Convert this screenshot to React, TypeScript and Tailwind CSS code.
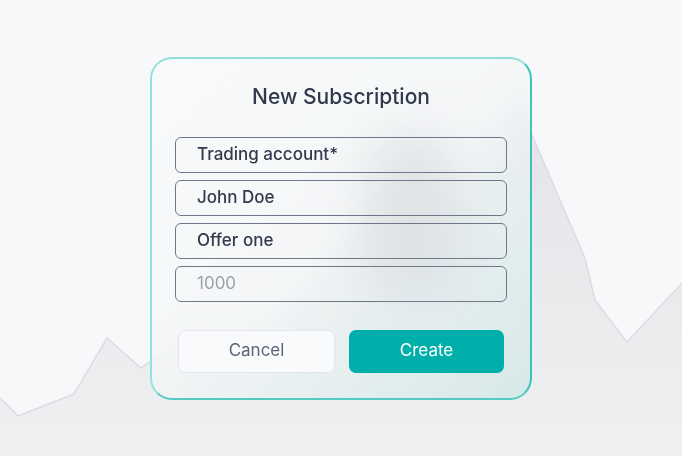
const CHART_LINE =
  "0,398 18,416 74,394 107,338 141,368 190,332 260,346 330,262 420,142 470,205 515,98 532,135 585,258 595,300 627,342 682,283";

function Field({ value, placeholder }: { value?: string; placeholder?: string }) {
  return (
    <div className="flex h-[36px] items-center rounded-[6px] border-[1.5px] border-[#6e7689] pl-[21px]">
      {value ? (
        <span className="text-[17px] font-medium text-[#323a4c]">{value}</span>
      ) : (
        <span className="text-[17px] text-[#9ba2ae]">{placeholder}</span>
      )}
    </div>
  );
}

export default function App() {
  return (
    <div
      className="relative flex h-[456px] w-[682px] items-center justify-center overflow-hidden bg-[#f7f8f9]"
      style={{ fontFamily: "Inter, 'Noto Sans', sans-serif" }}
    >
      <svg className="absolute inset-0" width="682" height="456" viewBox="0 0 682 456">
        <defs>
          <linearGradient id="area" x1="0" y1="0" x2="0" y2="1">
            <stop offset="0" stopColor="#e3e4e7" />
            <stop offset="1" stopColor="#eff0f1" />
          </linearGradient>
        </defs>
        <polygon points={`${CHART_LINE} 682,456 0,456`} fill="url(#area)" />
        <polyline points={CHART_LINE} fill="none" stroke="#dcdde0" strokeWidth="1.5" />
      </svg>

      <div className="relative w-[382px] overflow-hidden rounded-[22px] border-2 border-t-[#8fe0db] border-l-[#94e2dd] border-r-[#3ec3bb] border-b-[#55cac3] bg-gradient-to-br from-[#f9fafb]/90 via-[#f4f6f7]/70 to-[#d3e7e7]/85 px-[23px] pb-[25px] pt-[24px] backdrop-blur-lg">
        {/* blurred peak seen through the glass */}
        <div className="absolute left-[210px] top-[70px] h-[170px] w-[95px] rounded-full bg-[#d3d6da] opacity-50 blur-[24px]" />
        <div className="relative">
          <h1 className="text-center text-[21px] font-medium leading-[28px] text-[#303a4c]">
            New Subscription
          </h1>
          <div className="mt-[26px] flex flex-col gap-[7px]">
            <Field value="Trading account*" />
            <Field value="John Doe" />
            <Field value="Offer one" />
            <Field placeholder="1000" />
          </div>
          <div className="mx-[3px] mt-[28px] flex gap-[14px]">
            <button className="h-[43px] flex-1 rounded-[7px] border border-[#e3e5ea] bg-[#f9fafb] text-[17px] text-[#5c6578]">
              Cancel
            </button>
            <button className="h-[43px] flex-1 rounded-[7px] bg-[#00afa9] text-[17px] text-white">
              Create
            </button>
          </div>
        </div>
      </div>
    </div>
  );
}
